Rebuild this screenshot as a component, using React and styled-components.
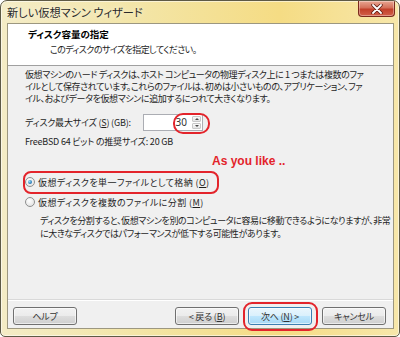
import React from 'react';
import styled, { createGlobalStyle } from 'styled-components';

const GlobalStyle = createGlobalStyle`
  html, body {
    margin: 0;
    padding: 0;
    background: #ffffff;
  }
  body {
    font-family: "Noto Sans CJK JP", "Noto Sans", sans-serif;
    font-feature-settings: "palt";
    color: #1e1e1e;
  }
`;

const Window = styled.div`
  width: 400px;
  height: 337px;
  box-sizing: border-box;
  display: flex;
  flex-direction: column;
  border: 1px solid #5e5a45;
  border-radius: 7px 7px 5px 5px;
  background: linear-gradient(90deg, #f4ecc6 0%, #f3e5a6 35%, #f5dc84 70%, #f7e7aa 100%);
  box-shadow: inset 0 0 0 1px rgba(255, 255, 255, 0.55);
  overflow: hidden;
`;

const TitleBar = styled.div`
  height: 22px;
  display: flex;
  align-items: flex-start;
  padding-left: 6px;
  padding-right: 4px;
`;

const Title = styled.div`
  flex: 1;
  font-size: 11.2px;
  line-height: 22px;
  color: #2a2a2a;
  text-shadow: 0 0 6px rgba(255, 255, 255, 0.9);
`;

const CloseButton = styled.div`
  width: 37px;
  height: 16px;
  box-sizing: border-box;
  display: flex;
  align-items: center;
  justify-content: center;
  border: 1px solid #7a2a1c;
  border-top: none;
  border-radius: 0 0 4px 4px;
  background: linear-gradient(180deg, #e8a692 0%, #d4705a 45%, #c2402a 55%, #d2604a 100%);
  box-shadow: inset 0 0 0 1px rgba(255, 255, 255, 0.35);
`;

const Client = styled.div`
  flex: 1;
  display: flex;
  flex-direction: column;
  margin: 0 5px 7px 6px;
  border: 1px solid #9c9780;
  background: #f0f0f0;
`;

const Header = styled.div`
  height: 42px;
  padding: 4px 0 0 20px;
  box-sizing: border-box;
  background: #ffffff;
  border-bottom: 1px solid #a0a0a0;
`;

const HeaderTitle = styled.div`
  font-size: 9.5px;
  font-weight: bold;
  line-height: 13px;
  color: #000;
`;

const HeaderSub = styled.div`
  margin: 3px 0 0 22px;
  font-size: 9px;
  line-height: 12px;
  letter-spacing: -0.6px;
  color: #1e1e1e;
`;

const Body = styled.div`
  flex: 1;
  display: flex;
  flex-direction: column;
  align-items: flex-start;
  padding: 3px 0 0 17px;
`;

const Text = styled.div`
  font-size: 9px;
  line-height: ${p => p.$lh || 12}px;
  white-space: nowrap;
  letter-spacing: ${p => p.$ls ?? -0.4}px;
  margin-top: ${p => p.$mt || 0}px;
`;

const U = styled.span`
  text-decoration: underline;
`;

const FieldRow = styled.div`
  display: flex;
  align-items: center;
  margin-top: 9px;
  height: 17px;
`;

const FieldLabel = styled.div`
  width: 118px;
  font-size: 9px;
  white-space: nowrap;
  letter-spacing: -0.2px;
`;

const NumberBox = styled.div`
  position: relative;
  width: 60px;
  height: 17px;
  box-sizing: border-box;
  display: flex;
  align-items: stretch;
  justify-content: flex-end;
  background: #fff;
  border: 1px solid #abadb3;

  &::after {
    content: "";
    position: absolute;
    left: 29px;
    right: -8px;
    top: -2px;
    bottom: -4px;
    border: 2px solid #e3242b;
    border-radius: 10px;
  }
`;

const NumberValue = styled.div`
  font-family: "Noto Sans", sans-serif;
  font-size: 10px;
  line-height: 15px;
  padding-right: 5px;
  color: #333;
`;

const Spinner = styled.div`
  width: 9px;
  margin: 1px 1px 1px 0;
  display: flex;
  flex-direction: column;
  gap: 1px;
`;

const SpinPart = styled.div`
  flex: 1;
  display: flex;
  align-items: center;
  justify-content: center;
  border: 1px solid #c8c8c8;
  border-radius: 1px;
  background: linear-gradient(180deg, #fafafa, #e4e4e4);

  &::before {
    content: "";
    border-left: 2px solid transparent;
    border-right: 2px solid transparent;
    ${p => (p.$up ? 'border-bottom: 2px solid #4a4a4a;' : 'border-top: 2px solid #4a4a4a;')}
  }
`;

const Note = styled.div`
  margin: 6px 0 0 187px;
  font-family: "Liberation Sans", Arial, sans-serif;
  font-weight: bold;
  font-size: 12px;
  line-height: 14px;
  color: #e3242b;
`;

const RadioRow = styled.div`
  position: relative;
  display: flex;
  align-items: center;
  gap: 3px;
  height: 14px;
  margin-top: ${p => p.$mt}px;

  ${p => p.$ring && `
    &::after {
      content: "";
      position: absolute;
      left: -2px;
      right: -9px;
      top: -4px;
      bottom: -5px;
      border: 2px solid #e3242b;
      border-radius: 8px;
    }
  `}
`;

const RadioDot = styled.span`
  width: 10px;
  height: 10px;
  box-sizing: border-box;
  border-radius: 50%;
  border: 1px solid #8e8f8f;
  background: radial-gradient(circle at 40% 35%, #ffffff 0%, #e6e6e6 70%, #d6d6d6 100%);
  display: flex;
  align-items: center;
  justify-content: center;

  &::after {
    content: "";
    width: 4px;
    height: 4px;
    border-radius: 50%;
    display: ${p => (p.$checked ? 'block' : 'none')};
    background: radial-gradient(circle at 35% 35%, #9fe0f8 0%, #2f84c0 60%, #1a4f80 100%);
  }
`;

const RadioText = styled.span`
  font-size: 9px;
  letter-spacing: 0.4px;
  white-space: nowrap;
`;

const Description = styled.div`
  margin: 5px 0 0 15px;
`;

const Footer = styled.div`
  display: flex;
  align-items: flex-start;
  padding: 7px 7px 3px 5px;
  border-top: 1px solid #d9d9d9;
  box-shadow: inset 0 1px 0 #ffffff;
`;

const Spacer = styled.div`
  flex: 1;
`;

const Button = styled.div`
  position: relative;
  width: 64px;
  height: 18px;
  box-sizing: border-box;
  margin-left: ${p => p.$ml || 0}px;
  display: flex;
  align-items: center;
  justify-content: center;
  font-size: 9px;
  letter-spacing: -0.2px;
  color: #333;
  border: 1px solid ${p => (p.$default ? '#3c7fb1' : '#707070')};
  border-radius: 3px;
  background: ${p =>
    p.$default
      ? 'linear-gradient(180deg, #eaf6fd 0%, #d9f0fc 50%, #bee6fd 51%, #a7d9f5 100%)'
      : 'linear-gradient(180deg, #f2f2f2 0%, #ebebeb 50%, #dddddd 51%, #cfcfcf 100%)'};
  box-shadow: inset 0 0 0 1px rgba(255, 255, 255, 0.6);

  ${p => p.$ring && `
    &::after {
      content: "";
      position: absolute;
      left: -6px;
      right: -7px;
      top: -6px;
      bottom: -7px;
      border: 2px solid #e3242b;
      border-radius: 9px;
    }
  `}
`;

const CloseIcon = () => (
  <svg width="12" height="10" viewBox="0 0 12 10">
    <path d="M2 1 L10 9 M10 1 L2 9" stroke="#5a1a10" strokeWidth="3.4" strokeLinecap="round" />
    <path d="M2 1 L10 9 M10 1 L2 9" stroke="#ffffff" strokeWidth="1.8" strokeLinecap="round" />
  </svg>
);

export default function App() {
  return (
    <>
      <GlobalStyle />
      <Window>
        <TitleBar>
          <Title>新しい仮想マシン ウィザード</Title>
          <CloseButton>
            <CloseIcon />
          </CloseButton>
        </TitleBar>
        <Client>
          <Header>
            <HeaderTitle>ディスク容量の指定</HeaderTitle>
            <HeaderSub>このディスクのサイズを指定してください。</HeaderSub>
          </Header>
          <Body>
            <Text>仮想マシンのハード ディスクは、ホスト コンピュータの物理ディスク上に 1 つまたは複数のファ</Text>
            <Text>イルとして保存されています。これらのファイルは、初めは小さいものの、アプリケーション、ファ</Text>
            <Text>イル、およびデータを仮想マシンに追加するにつれて大きくなります。</Text>
            <FieldRow>
              <FieldLabel>ディスク最大サイズ (<U>S</U>) (GB):</FieldLabel>
              <NumberBox>
                <NumberValue>30</NumberValue>
                <Spinner>
                  <SpinPart $up />
                  <SpinPart />
                </Spinner>
              </NumberBox>
            </FieldRow>
            <Text $mt={5} $ls={-0.2}>FreeBSD 64 ビット の推奨サイズ: 20 GB</Text>
            <Note>As you like ..</Note>
            <RadioRow $mt={7} $ring>
              <RadioDot $checked />
              <RadioText>仮想ディスクを単一ファイルとして格納 (<U>O</U>)</RadioText>
            </RadioRow>
            <RadioRow $mt={6}>
              <RadioDot />
              <RadioText>仮想ディスクを複数のファイルに分割 (<U>M</U>)</RadioText>
            </RadioRow>
            <Description>
              <Text $lh={13}>ディスクを分割すると、仮想マシンを別のコンピュータに容易に移動できるようになりますが、非常</Text>
              <Text $lh={13}>に大きなディスクではパフォーマンスが低下する可能性があります。</Text>
            </Description>
          </Body>
          <Footer>
            <Button>ヘルプ</Button>
            <Spacer />
            <Button>&lt; 戻る (<U>B</U>)</Button>
            <Button $ml={9} $default $ring>次へ (<U>N</U>) &gt;</Button>
            <Button $ml={10}>キャンセル</Button>
          </Footer>
        </Client>
      </Window>
    </>
  );
}
